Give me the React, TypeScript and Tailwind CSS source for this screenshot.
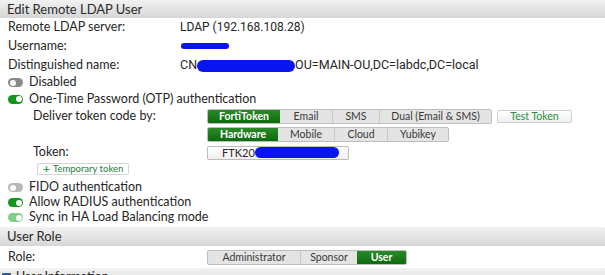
import React from 'react';

type ToggleProps = { on: boolean; faded?: boolean };

function Toggle({ on, faded }: ToggleProps) {
  const track = on ? (faded ? 'bg-[#7fcf8a]' : 'bg-[#14961e]') : faded ? 'bg-[#b8b8b8]' : 'bg-[#8a8a8a]';
  return (
    <span className={`relative inline-block w-[15px] h-[9px] rounded-full ${track}`}>
      <span
        className={`absolute top-[1.5px] w-[6px] h-[6px] rounded-full bg-white ${on ? 'right-[1.5px]' : 'left-[1.5px]'}`}
      />
    </span>
  );
}

function Seg({ items, active, widths }: { items: string[]; active: number; widths: string[] }) {
  return (
    <div className="flex h-[15px] rounded-[2px] border border-[#bdbdbd] overflow-hidden">
      {items.map((t, i) => (
        <div
          key={t}
          className={`${widths[i]} flex items-center justify-center text-[10.5px] ${
            i === active
              ? 'bg-gradient-to-b from-[#2a8a2a] to-[#0b6b0b] text-white font-bold'
              : 'bg-[#e4e4e4] text-[#3a3a3a] border-l border-[#c8c8c8]'
          } ${i === 0 || i === active + 1 ? 'border-l-0' : ''}`}
        >
          {t}
        </div>
      ))}
    </div>
  );
}

function Header({ title }: { title: string }) {
  return (
    <div className="h-[18px] flex items-center px-[7px] bg-gradient-to-b from-[#f2f2f2] to-[#d6d6d6] text-[13px] text-[#2a2a2a]">
      {title}
    </div>
  );
}

export default function App() {
  return (
    <div
      className="w-[605px] h-[275px] overflow-hidden bg-white text-[#262626] text-[12.5px] leading-none"
      style={{ fontFamily: 'Lato, "Liberation Sans", sans-serif' }}
    >
      <Header title="Edit Remote LDAP User" />

      <div className="px-[8px]">
        <div className="flex items-center h-[18px]">
          <span className="w-[172px]">Remote LDAP server:</span>
          <span className="text-[12px]" style={{ fontFamily: 'Roboto, sans-serif' }}>LDAP (192.168.108.28)</span>
        </div>
        <div className="flex items-center h-[20px]">
          <span className="w-[173px]">Username:</span>
          <span className="inline-block w-[48px] h-[6px] rounded-full bg-[#0a14f0]" />
        </div>
        <div className="flex items-center h-[19px]">
          <span className="w-[172px]">Distinguished name:</span>
          <span className="flex items-center text-[12.5px]" style={{ fontFamily: 'Roboto, sans-serif' }}>
            CN
            <span className="inline-block w-[98px] h-[12px] rounded-full bg-[#0a14f0]" />
            OU=MAIN-OU,DC=labdc,DC=local
          </span>
        </div>

        <div className="flex items-center gap-[6px] h-[15px]">
          <Toggle on={false} />
          <span>Disabled</span>
        </div>
        <div className="flex items-center gap-[6px] h-[18px]">
          <Toggle on />
          <span>One-Time Password (OTP) authentication</span>
        </div>

        <div className="pl-[25px]">
          <div className="flex items-center h-[16px]">
            <span className="w-[174px]">Deliver token code by:</span>
            <Seg
              items={['FortiToken', 'Email', 'SMS', 'Dual (Email & SMS)']}
              active={0}
              widths={['w-[72px]', 'w-[52px]', 'w-[47px]', 'w-[112px]']}
            />
            <button className="ml-[5px] w-[75px] h-[13px] rounded-[2px] border border-[#cfcfcf] bg-gradient-to-b from-white to-[#f0f0f0] text-[10.5px] text-[#23913a]">
              Test Token
            </button>
          </div>
          <div className="flex items-center h-[21px] pl-[174px]">
            <Seg
              items={['Hardware', 'Mobile', 'Cloud', 'Yubikey']}
              active={0}
              widths={['w-[70px]', 'w-[56px]', 'w-[53px]', 'w-[61px]']}
            />
          </div>
          <div className="flex items-center h-[15px]">
            <span className="w-[174px]">Token:</span>
            <div className="w-[142px] h-[14px] rounded-[2px] border border-[#bcbcbc] bg-gradient-to-b from-white to-[#efefef] flex items-center pl-[14px] text-[11px]">
              FTK20
              <span className="inline-block w-[84px] h-[11px] rounded-full bg-[#0a14f0]" />
            </div>
          </div>
          <div className="h-[18px] flex items-center">
            <button className="ml-[4px] h-[12px] px-[5px] flex items-center gap-[3px] rounded-[2px] border border-[#d4d4d4] bg-white text-[9.5px] text-[#23803a]">
              <span className="text-[#2fa83a] font-bold text-[12px] leading-none">+</span>
              Temporary token
            </button>
          </div>
        </div>

        <div className="flex items-center gap-[6px] h-[15px] mt-[2px]">
          <Toggle on={false} faded />
          <span>FIDO authentication</span>
        </div>
        <div className="flex items-center gap-[6px] h-[15px]">
          <Toggle on />
          <span>Allow RADIUS authentication</span>
        </div>
        <div className="flex items-center gap-[6px] h-[15px]">
          <Toggle on faded />
          <span>Sync in HA Load Balancing mode</span>
        </div>
      </div>

      <div className="mt-[2px]">
        <div className="h-[19px] flex items-center px-[7px] bg-gradient-to-b from-[#f2f2f2] to-[#d6d6d6] text-[13px] text-[#2a2a2a]">
          User Role
        </div>
      </div>
      <div className="px-[8px] flex items-center h-[22px]">
        <span className="w-[199px]">Role:</span>
        <Seg items={['Administrator', 'Sponsor', 'User']} active={2} widths={['w-[92px]', 'w-[57px]', 'w-[49px]']} />
      </div>
      <div className="h-[19px] flex items-center gap-[5px] px-[2px] bg-gradient-to-b from-[#f2f2f2] to-[#d6d6d6]">
        <span className="w-[9px] h-[9px] rounded-[1px] bg-[#2f5b8f]" />
        <span>User Information</span>
      </div>
    </div>
  );
}
